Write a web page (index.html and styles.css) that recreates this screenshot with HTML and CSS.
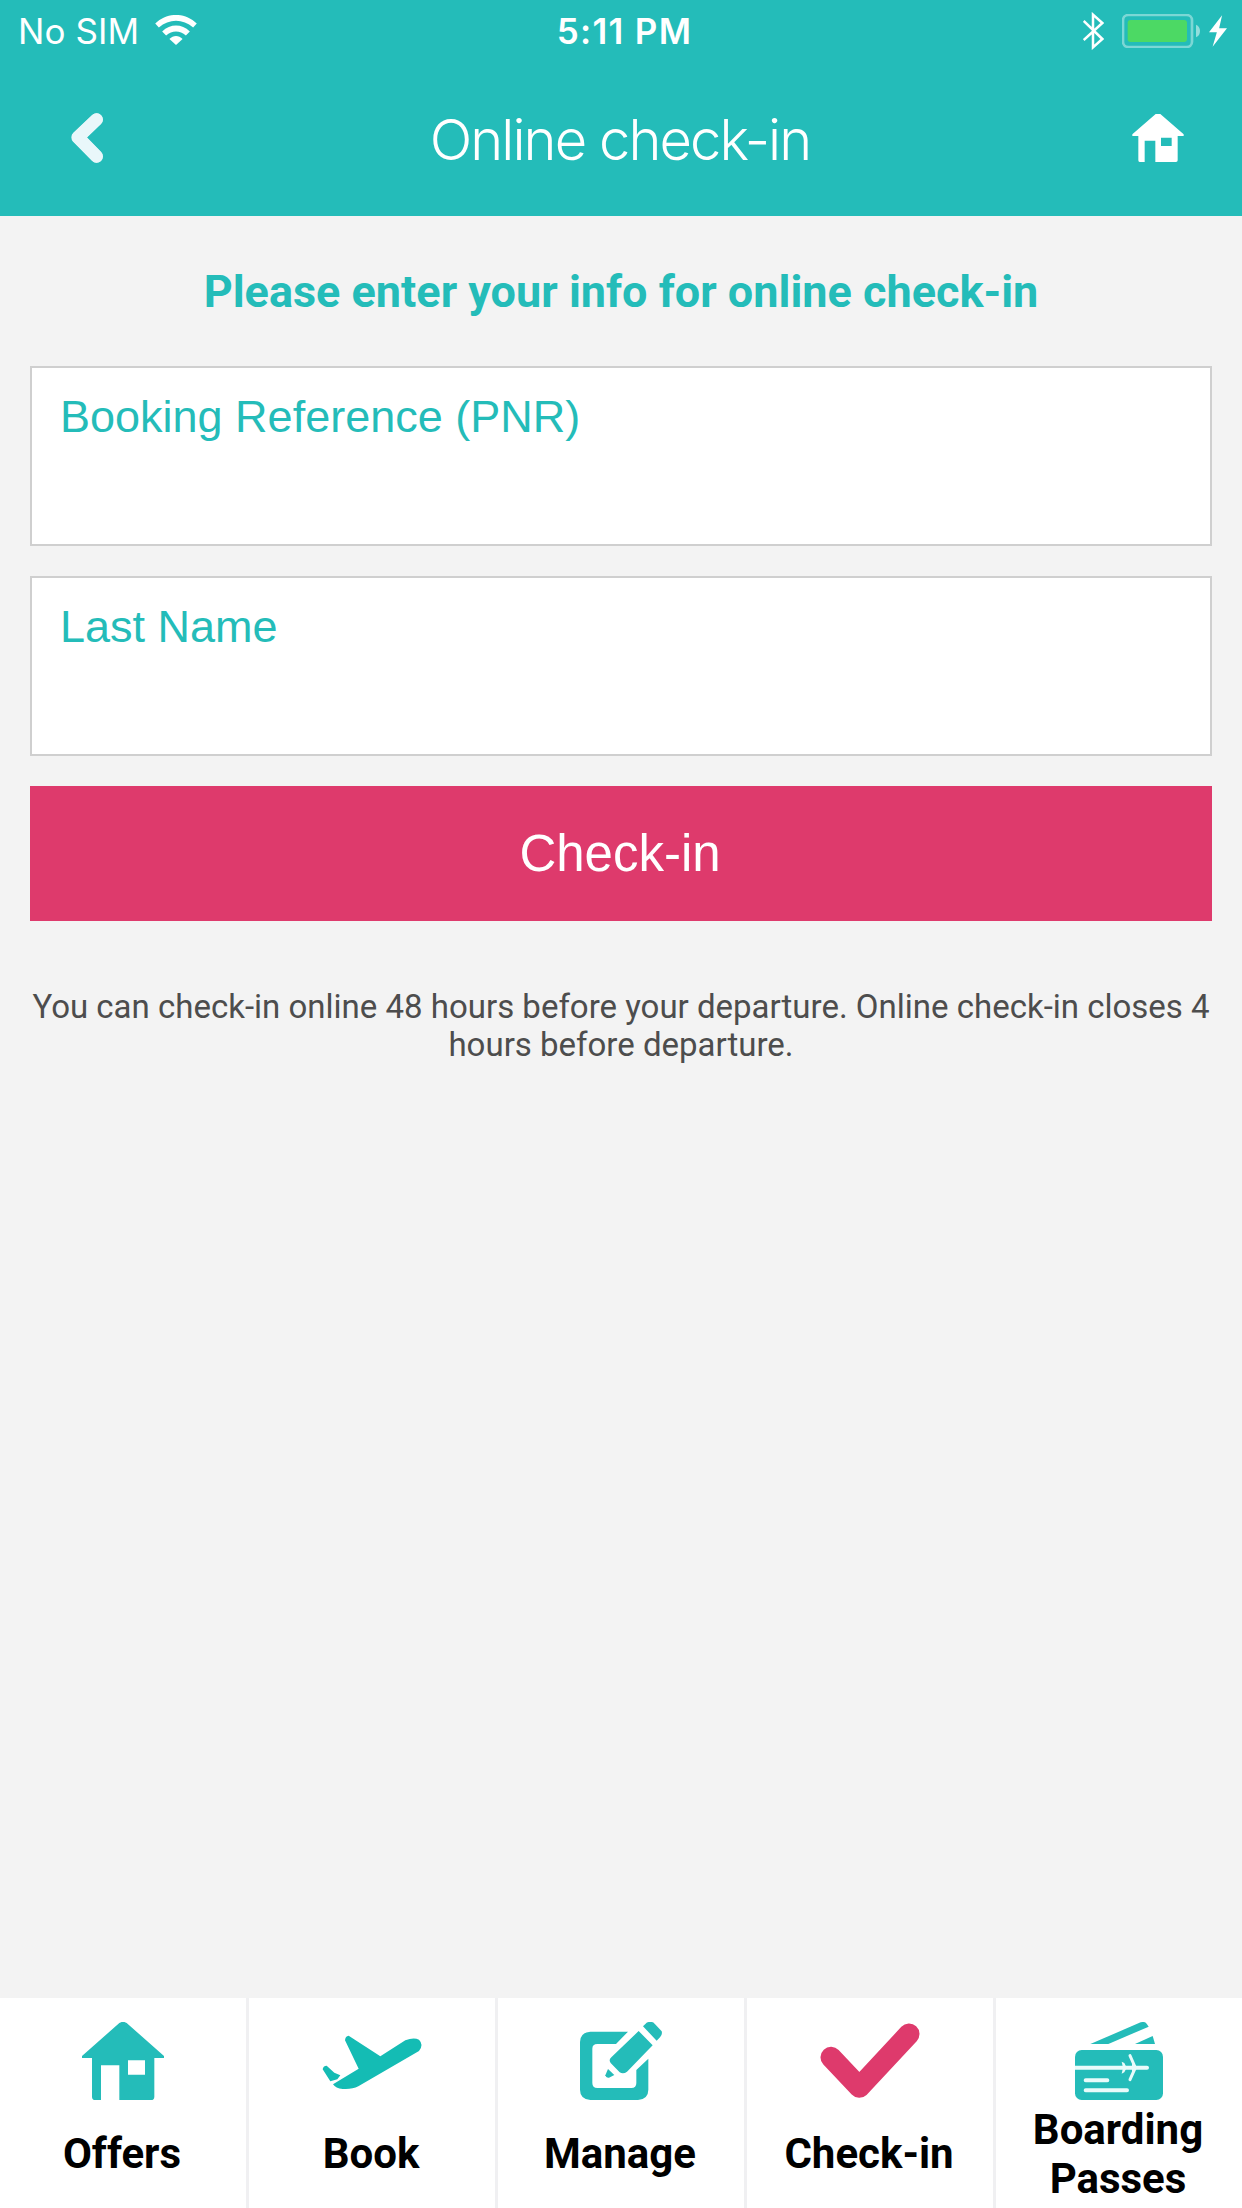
FILE: index.html
```html
<!DOCTYPE html>
<html lang="en">
<head>
<meta charset="utf-8">
<title>Online check-in</title>
<link rel="stylesheet" href="styles.css">
</head>
<body>
<div class="app">
  <header class="header">
    <div class="status">
      <div class="status-left">
        <span class="carrier">No SIM</span>
        <svg class="wifi" viewBox="468 44 126 91" fill="#fff">
          <path d="M468 70C504 35 558 35 594 70L583 82C552 55 510 55 479 82Z"/>
          <path d="M489 94C514 70 548 70 573 94L561 106C543 90 519 90 501 106Z"/>
          <path d="M511 117C523 105 539 105 551 117L531 135Z"/>
        </svg>
      </div>
      <span class="time">5:11 PM</span>
      <div class="status-right">
        <svg class="bluetooth" viewBox="129 35 63 114" fill="none" stroke="#fff" stroke-width="7.5">
          <path d="M131 62L187 116L159 141V43L187 68L131 119"/>
        </svg>
        <svg class="battery" viewBox="246 39 234 102">
          <rect x="249" y="42" width="207" height="96" rx="16" fill="none" stroke="#fff" stroke-opacity=".4" stroke-width="8"/>
          <rect x="263" y="57" width="178" height="66" rx="9" fill="#4cd964"/>
          <path d="M468 71Q480 76 480 90Q480 104 468 109Z" fill="#fff" fill-opacity=".5"/>
        </svg>
        <svg class="bolt" viewBox="506 43 55 97" fill="#fff">
          <path d="M546 43L506 95H530L517 140L561 83H537Z"/>
        </svg>
      </div>
    </div>
    <div class="nav">
      <svg class="back" viewBox="213 336 97 150" fill="none" stroke="#e9f7fa" stroke-width="38" stroke-linecap="round" stroke-linejoin="round">
        <path d="M290 355L233 409L290 467" />
        <path d="M291 355L235 409L291 467" />
      </svg>
      <h1 class="title">Online check-in</h1>
      <svg class="home" viewBox="277 342 154 144" fill="#fff">
        <path fill-rule="evenodd" d="M347 342H361L431 403V408H413V481Q413 486 408 486H346V422H314V486H299Q295 486 295 481V408H277V403ZM363 413V438H395V413Z"/>
      </svg>
    </div>
  </header>

  <main class="content">
    <h2 class="intro">Please enter your info for online check-in</h2>
    <div class="field"><span class="field-label pnr">Booking Reference (PNR)</span></div>
    <div class="field"><span class="field-label">Last Name</span></div>
    <button class="submit" type="button">Check-in</button>
    <p class="note">You can check-in online 48 hours before your departure. Online check-in closes 4 hours before departure.</p>
  </main>

  <nav class="tabs">
    <a class="tab">
      <svg class="tab-icon" width="82" height="78" viewBox="246 96 246 234" fill="#24bcb9">
        <path fill-rule="evenodd" d="M246 198L358 99Q369 92 380 99L492 198V204H463V320Q463 330 453 330H358V226H303V330H286Q276 330 276 320V204H246ZM384 211V254H435V211Z"/>
      </svg>
      <span class="tab-label">Offers</span>
    </a>
    <a class="tab">
      <svg class="tab-icon" width="100" height="78" viewBox="216 96 300 234" fill="#14bcb4">
        <path d="M285 151Q286 138 296 137L391 199L466 151Q491 141 507 149Q522 164 507 183L325 289Q306 299 278 297Q257 295 249 283L326 236Z"/>
        <path d="M218 238Q219 228 230 227L253 248L271 256L262 268L241 274Z"/>
      </svg>
      <span class="tab-label">Book</span>
    </a>
    <a class="tab">
      <svg class="tab-icon" width="82" height="78" viewBox="240 96 246 234" fill="#24bcb9">
        <path d="M384 125H271Q240 128 240 156V299Q240 327 271 330H414Q445 327 445 299V206L409 240V279Q409 294 394 294H292Q277 294 277 279V176Q277 162 292 162H348Z"/>
        <path d="M416 123L458 166L381 245Q370 254 359 247L332 219Q325 209 334 202Z"/>
        <path d="M429 109L440 98Q451 93 461 98L485 124Q488 134 480 142L470 152Z"/>
        <path d="M324 237L343 255L327 263Q318 265 316 256Z"/>
      </svg>
      <span class="tab-label">Manage</span>
    </a>
    <a class="tab">
      <svg class="tab-icon" width="100" height="78" viewBox="225 96 300 234" fill="none" stroke="#de3a6c" stroke-width="63" stroke-linecap="round" stroke-linejoin="round">
        <path d="M258 202L343 292L492 132"/>
      </svg>
      <span class="tab-label">Check-in</span>
    </a>
    <a class="tab">
      <svg class="tab-icon" width="88" height="78" viewBox="249 96 264 234" fill="#24bcb9">
        <path d="M295 162L446 97Q457 93 464 101L470 110L349 162Z"/>
        <path d="M429 162L482 138L489 162Z"/>
        <rect x="249" y="180" width="264" height="150" rx="20"/>
        <g fill="none" stroke="#e9fbfa" stroke-width="12" stroke-linecap="round">
          <path d="M246 233H465" />
          <path d="M281 271H346M281 301H405"/>
          <path d="M414 197L430 233L414 269" stroke-width="9"/>
        </g>
        <path d="M389 215L397 219L404 233L397 247L389 251L393 233ZM420 218L438 233L420 248Z" fill="#e9fbfa"/>
      </svg>
      <span class="tab-label">Boarding Passes</span>
    </a>
  </nav>
</div>
</body>
</html>
```
FILE: styles.css
```css
* {
  box-sizing: border-box;
}

body {
  margin: 0;
  background: #f3f3f3;
  font-family: Roboto, "Liberation Sans", sans-serif;
}

.app {
  display: flex;
  flex-direction: column;
  width: 1242px;
  height: 2208px;
}

svg {
  display: block;
  flex: none;
}

.header {
  height: 216px;
  background: #24bcb9;
  color: #fff;
}

.status {
  display: grid;
  grid-template-columns: 1fr auto 1fr;
  align-items: center;
  height: 62px;
  padding: 0 15px 0 18px;
  font-family: Inter, "Liberation Sans", sans-serif;
  font-size: 35px;
}

.status-left,
.status-right {
  display: flex;
  align-items: center;
}

.status-left {
  gap: 16px;
}

.status-right {
  justify-content: flex-end;
}

.carrier {
  letter-spacing: 0.1px;
  white-space: nowrap;
}

.wifi {
  width: 42px;
  height: 30px;
  margin-bottom: 2px;
}

.time {
  padding-left: 4px;
  font-weight: 600;
  letter-spacing: 1.3px;
}

.bluetooth {
  width: 21px;
  height: 38px;
  margin-right: 18px;
}

.battery {
  width: 78px;
  height: 34px;
  margin-right: 9px;
}

.bolt {
  width: 18px;
  height: 32px;
}

.nav {
  display: flex;
  align-items: center;
  justify-content: space-between;
  height: 152px;
  padding: 0 58px 0 71px;
}

.back {
  width: 32px;
  height: 50px;
  margin-right: 5px;
}

.title {
  margin: 0;
  padding-top: 3px;
  font-family: Inter, "Liberation Sans", sans-serif;
  font-size: 56px;
  font-weight: 300;
  letter-spacing: -1.9px;
  line-height: 68px;
}

.home {
  width: 52px;
  height: 48px;
}

.content {
  display: flex;
  flex: 1;
  flex-direction: column;
  gap: 30px;
  padding: 49px 30px 0;
}

.intro {
  margin: 0 0 18px;
  color: #24bcb9;
  font-size: 45px;
  font-weight: 700;
  line-height: 53px;
  text-align: center;
}

.field {
  height: 180px;
  padding: 23px 28px;
  border: 2px solid #cfcfcf;
  background: #fff;
}

.field-label {
  color: #24bcb9;
  font-family: "Liberation Sans", sans-serif;
  font-size: 45px;
  line-height: 52px;
}

.submit {
  height: 135px;
  padding: 0 2px 0 0;
  border: 0;
  background: #de3a6c;
  color: #fff;
  font-family: "Liberation Sans", sans-serif;
  font-size: 51px;
}

.note {
  margin: 37px 0 0;
  color: #4d4d4d;
  font-size: 33px;
  line-height: 38px;
  text-align: center;
}

.tabs {
  display: flex;
  height: 210px;
  background: #fff;
}

.tab {
  display: flex;
  flex-direction: column;
  align-items: center;
  width: 249px;
  padding-top: 24px;
  border-right: 3px solid #f0f0f2;
}

.tab:last-child {
  width: 246px;
  border-right: 0;
}

.tab-label {
  display: flex;
  flex: 1;
  align-items: center;
  padding: 0 31px 1px 29px;
  color: #000;
  font-size: 42px;
  font-weight: 700;
  line-height: 49px;
  text-align: center;
}
```
